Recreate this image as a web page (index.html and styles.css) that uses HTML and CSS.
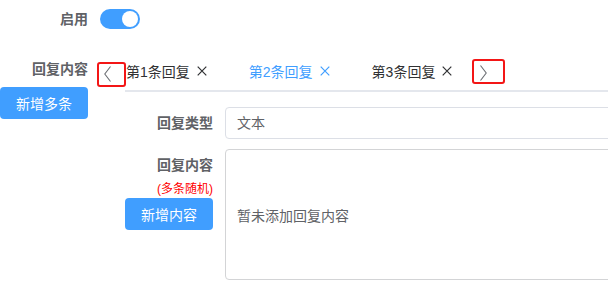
FILE: index.html
```html
<!DOCTYPE html>
<html lang="zh">
<head>
<meta charset="utf-8">
<link rel="stylesheet" href="styles.css">
</head>
<body>
<div class="page">
  <div class="row row-switch">
    <div class="label">启用</div>
    <div class="switch"><span class="knob"></span></div>
  </div>
  <div class="row row-replies">
    <div class="side">
      <div class="label side-label">回复内容</div>
      <button class="btn">新增多条</button>
    </div>
    <div class="tabs">
      <div class="tabs-header">
        <span class="nav-btn prev"><svg width="7" height="16" viewBox="0 0 7 16"><path d="M6.5 0.5 L0.8 8 L6.5 15.5" fill="none" stroke="#6b6e73" stroke-width="1.1"/></svg></span>
        <div class="nav-wrap">
          <div class="nav-scroll">
            <div class="nav-list">
              <div class="tab">第1条回复<svg class="close" width="14" height="14" viewBox="0 0 14 14"><path d="M2.7 2.7 L11.3 11.3 M11.3 2.7 L2.7 11.3" stroke="currentColor" stroke-width="1.2"/></svg></div>
              <div class="tab active">第2条回复<svg class="close" width="14" height="14" viewBox="0 0 14 14"><path d="M2.7 2.7 L11.3 11.3 M11.3 2.7 L2.7 11.3" stroke="currentColor" stroke-width="1.2"/></svg></div>
              <div class="tab">第3条回复<svg class="close" width="14" height="14" viewBox="0 0 14 14"><path d="M2.7 2.7 L11.3 11.3 M11.3 2.7 L2.7 11.3" stroke="currentColor" stroke-width="1.2"/></svg></div>
            </div>
          </div>
          <span class="nav-btn next"><svg width="7" height="16" viewBox="0 0 7 16"><path d="M0.5 0.5 L6.2 8 L0.5 15.5" fill="none" stroke="#6b6e73" stroke-width="1.1"/></svg></span>
        </div>
      </div>
      <div class="pane">
        <div class="fitem">
          <div class="flabel">回复类型</div>
          <div class="input">文本</div>
        </div>
        <div class="fitem">
          <div class="flabel flabel-col">
            <span>回复内容</span>
            <span class="hint">(多条随机)</span>
            <button class="btn btn-add">新增内容</button>
          </div>
          <div class="textarea"><span>暂未添加回复内容</span></div>
        </div>
      </div>
    </div>
  </div>
  <span class="mark mark-prev"></span>
  <span class="mark mark-next"></span>
</div>
</body>
</html>
```
FILE: styles.css
```css
body {
  margin: 0;
  overflow: hidden;
  background: #fff;
  font-family: "Liberation Sans", "Noto Sans CJK SC", sans-serif;
  font-size: 14px;
}
.page {
  position: relative;
  width: 760px;
}
.row {
  display: flex;
  align-items: flex-start;
}
.row-switch {
  height: 38px;
}
.label {
  width: 100px;
  box-sizing: border-box;
  padding-right: 12px;
  text-align: right;
  line-height: 38px;
  font-weight: 700;
  color: #606266;
}
.switch {
  position: relative;
  margin-top: 9px;
  width: 40px;
  height: 20px;
  border-radius: 10px;
  background: #409eff;
}
.knob {
  position: absolute;
  top: 2px;
  right: 2px;
  width: 16px;
  height: 16px;
  border-radius: 50%;
  background: #fff;
}
.row-replies {
  margin-top: 14px;
}
.side {
  width: 100px;
  flex-shrink: 0;
}
.side-label {
  line-height: 35px;
}
.btn {
  display: block;
  width: 88px;
  height: 32px;
  padding: 0;
  border: 0;
  border-radius: 4px;
  background: #409eff;
  color: #fff;
  font-family: inherit;
  font-size: 14px;
}
.tabs {
  flex: 1;
  min-width: 0;
}
.tabs-header {
  display: flex;
  height: 40px;
}
.nav-btn {
  display: flex;
  align-items: center;
  box-sizing: border-box;
  flex-shrink: 0;
}
.prev {
  width: 25px;
  height: 40px;
  padding-left: 4px;
  padding-top: 3px;
}
.nav-wrap {
  flex: 1;
  display: flex;
  height: 38px;
  border-bottom: 2px solid #e4e7ed;
}
.nav-scroll {
  width: 347px;
  flex-shrink: 0;
  overflow: hidden;
}
.nav-list {
  display: flex;
  margin-left: -19px;
}
.tab {
  position: relative;
  display: flex;
  align-items: center;
  height: 38px;
  padding: 0 20px;
  color: #303133;
  white-space: nowrap;
}
.tab .close {
  margin-left: 5px;
}
.tab.active {
  color: #409eff;
}
.tab.active::after {
  content: "";
  position: absolute;
  left: 20px;
  right: 20px;
  bottom: -2px;
  height: 2px;
  background: #409eff;
}
.next {
  width: 30px;
  height: 38px;
  padding-left: 8px;
  padding-top: 3px;
}
.pane {
  margin-top: 15px;
}
.fitem {
  display: flex;
  margin-bottom: 10px;
}
.flabel {
  width: 125px;
  flex-shrink: 0;
  box-sizing: border-box;
  padding-right: 12px;
  text-align: right;
  line-height: 32px;
  font-weight: 700;
  color: #606266;
}
.flabel-col {
  display: flex;
  flex-direction: column;
  align-items: flex-end;
}
.hint {
  font-size: 12px;
  line-height: 16px;
  font-weight: 400;
  color: #f00;
}
.btn-add {
  margin-top: 1px;
  font-weight: 400;
}
.input {
  flex: 1;
  height: 32px;
  box-sizing: border-box;
  border: 1px solid #dcdfe6;
  border-radius: 4px;
  padding-left: 11px;
  line-height: 30px;
  color: #606266;
}
.textarea {
  flex: 1;
  height: 131px;
  box-sizing: border-box;
  border: 1px solid #d3d4d6;
  border-radius: 4px;
  display: flex;
  align-items: center;
  padding-left: 11px;
  color: #606266;
}
.mark {
  position: absolute;
  box-sizing: border-box;
  border: 2px solid #f31616;
  border-radius: 3px;
}
.mark-prev {
  left: 97px;
  top: 62px;
  width: 29px;
  height: 25px;
}
.mark-next {
  left: 472px;
  top: 59px;
  width: 33px;
  height: 25px;
}
```
